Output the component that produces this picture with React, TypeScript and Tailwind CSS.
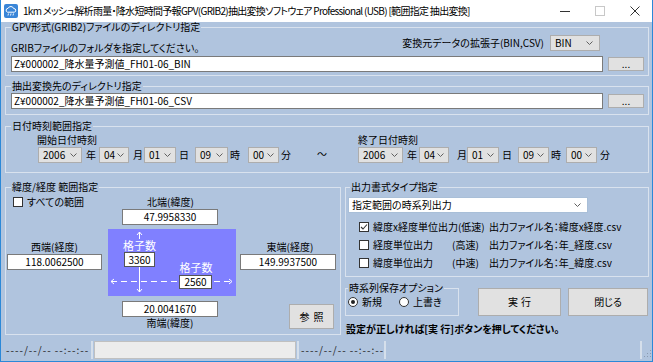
import React from 'react';

function Chevron() {
  return (
    <svg width="7" height="4" viewBox="0 0 7 4" className="shrink-0">
      <path d="M0.5 0.5L3.5 3.5L6.5 0.5" stroke="#606060" fill="none" />
    </svg>
  );
}

function Select({ value, className }: { value: string; className: string }) {
  return (
    <div className={`flex items-center justify-between h-[16px] bg-[#e1e1e1] border border-[#adadad] pl-[4px] pr-[4px] ${className}`}>
      <span>{value}</span>
      <Chevron />
    </div>
  );
}

function Unit({ ch, className }: { ch: string; className: string }) {
  return <span className={`inline-block w-[10px] text-center leading-[16px] ${className}`}>{ch}</span>;
}

function CheckBox({ checked }: { checked?: boolean }) {
  return (
    <span className="w-[10px] h-[10px] shrink-0 border border-[#333] bg-white flex items-center justify-center">
      {checked && (
        <svg width="8" height="8" viewBox="0 0 8 8">
          <path d="M1 4L3 6L7 1.5" stroke="#333" strokeWidth="1.1" fill="none" />
        </svg>
      )}
    </span>
  );
}

function Radio({ checked }: { checked?: boolean }) {
  return (
    <span className="w-[10px] h-[10px] shrink-0 rounded-full border border-[#333] bg-white flex items-center justify-center">
      {checked && <span className="w-[4px] h-[4px] rounded-full bg-[#222]" />}
    </span>
  );
}

function TitleBar() {
  return (
    <div className="h-[22px] shrink-0 bg-white flex items-center">
      <svg width="14" height="14" viewBox="0 0 14 14" className="ml-[3px]">
        <rect x="0" y="0" width="14" height="14" rx="2" fill="#3a86d8" />
        <path d="M3.5 8.2a2 2 0 0 1 0.6-3.9a3 3 0 0 1 5.6 0.3a1.8 1.8 0 0 1 0.5 3.6z" fill="none" stroke="#fff" strokeWidth="1" />
        <path d="M4.5 9.5L4 11.5M7 9.5L6.5 11.5M9.5 9.5L9 11.5" stroke="#fff" strokeWidth="0.9" />
      </svg>
      <span className="ml-[5px] text-[10px] tracking-[-0.7px] leading-[22px] text-black whitespace-nowrap">
        1km メッシュ解析雨量・降水短時間予報GPV(GRIB2)抽出変換ソフトウェア Professional (USB) [範囲指定 抽出変換]
      </span>
      <div className="ml-auto flex h-full">
        <div className="w-[35px] flex items-center justify-center">
          <span className="w-[10px] h-[1px] bg-[#333]" />
        </div>
        <div className="w-[35px] flex items-center justify-center">
          <span className="w-[10px] h-[10px] border border-[#c8c8c8]" />
        </div>
        <div className="w-[35px] flex items-center justify-center">
          <svg width="10" height="10" viewBox="0 0 10 10">
            <path d="M0.5 0.5L9.5 9.5M9.5 0.5L0.5 9.5" stroke="#333" strokeWidth="1" />
          </svg>
        </div>
      </div>
    </div>
  );
}

function Group({ title, className, legendClass, children }: { title: string; className: string; legendClass: string; children: React.ReactNode }) {
  return (
    <fieldset className={`border border-[#d9e2ee] ${className}`}>
      <legend className={`px-[1px] text-[10px] leading-[10px] ${legendClass}`}>{title}</legend>
      {children}
    </fieldset>
  );
}

function DateStart() {
  return (
    <div className="flex flex-col ml-[26px]">
      <span className="leading-[11px]">開始日付時刻</span>
      <div className="flex mt-[2px] ml-[1px]">
        <Select value="2006" className="w-[44px]" />
        <Unit ch="年" className="ml-[4px]" />
        <Select value="04" className="ml-[3px] w-[30px]" />
        <Unit ch="月" className="ml-[4px]" />
        <Select value="01" className="ml-[1px] w-[32px]" />
        <Unit ch="日" className="ml-[3px]" />
        <Select value="09" className="ml-[6px] w-[33px]" />
        <Unit ch="時" className="ml-[2px]" />
        <Select value="00" className="ml-[8px] w-[31px]" />
        <Unit ch="分" className="ml-[2px]" />
      </div>
    </div>
  );
}

function DateEnd() {
  return (
    <div className="flex flex-col ml-[31px]">
      <span className="leading-[11px]">終了日付時刻</span>
      <div className="flex mt-[2px]">
        <Select value="2006" className="w-[45px]" />
        <Unit ch="年" className="ml-[4px]" />
        <Select value="04" className="ml-[2px] w-[30px]" />
        <Unit ch="月" className="ml-[8px]" />
        <Select value="01" className="w-[32px]" />
        <Unit ch="日" className="ml-[3px]" />
        <Select value="09" className="ml-[6px] w-[31px]" />
        <Unit ch="時" className="ml-[2px]" />
        <Select value="00" className="ml-[5px] w-[31px]" />
        <Unit ch="分" className="ml-[3px]" />
      </div>
    </div>
  );
}

function NumBox({ value, className }: { value: string; className: string }) {
  return (
    <div className={`h-[16px] bg-white border border-[#7a7a7a] flex items-center justify-center leading-[14px] ${className}`}>
      {value}
    </div>
  );
}

function GridDiagram() {
  return (
    <div className="relative ml-[1px] mt-[1px] w-[128px] h-[67px] bg-[#8080ff] text-white">
      <svg width="128" height="67" viewBox="0 0 128 67" className="absolute inset-0">
        <g stroke="#fff" strokeWidth="1" fill="none">
          <path d="M31.5 3V10M29 6L31.5 3L34 6" />
          <path d="M31.5 38V63M29 60L31.5 63L34 60" />
          <path d="M3 52.5H70" strokeDasharray="6 4" />
          <path d="M6 50L3 52.5L6 55" />
          <path d="M106 52.5H124" strokeDasharray="6 4" />
          <path d="M121 50L124 52.5L121 55" />
        </g>
      </svg>
      <span className="absolute left-[15px] top-[10px] w-[33px] text-center text-[11px] leading-[12px]">格子数</span>
      <div className="absolute left-[16px] top-[23px] w-[31px] h-[15px] bg-white border border-[#555] text-black flex items-center justify-center leading-[13px]">3360</div>
      <span className="absolute left-[71px] top-[32px] w-[34px] text-center text-[11px] leading-[12px]">格子数</span>
      <div className="absolute left-[71px] top-[46px] w-[33px] h-[14px] bg-white border border-[#555] text-black flex items-center justify-center leading-[12px]">2560</div>
    </div>
  );
}

function LatLonGroup() {
  return (
    <Group title="緯度/経度 範囲指定" className="w-[336px] shrink-0 pb-[3px]" legendClass="ml-[5px]">
      <div className="grid grid-cols-[101px_130px_102px]">
        {/* row 1 */}
        <div className="h-[16px] flex items-end">
          <div className="ml-[7px] h-[12px] flex items-center gap-[4px]">
            <CheckBox />
            <span>すべての範囲</span>
          </div>
        </div>
        <div className="h-[16px] flex items-end justify-center pr-[3px]">
          <span>北端(緯度)</span>
        </div>
        <div />
        {/* row 2 */}
        <div />
        <NumBox value="47.9958330" className="ml-[15px] mt-[1px] w-[96px]" />
        <div />
        {/* row 3 */}
        <div className="flex flex-col pt-[16px]">
          <span className="ml-[1px] w-[95px] text-center">西端(経度)</span>
          <NumBox value="118.0062500" className="ml-[1px] mt-[1px] w-[95px]" />
        </div>
        <div className="mt-[3px]">
          <GridDiagram />
        </div>
        <div className="flex flex-col pt-[16px]">
          <span className="ml-[3px] w-[100px] text-center">東端(経度)</span>
          <NumBox value="149.9937500" className="ml-[3px] mt-[1px] w-[96px]" />
        </div>
        {/* row 4/5 */}
        <div />
        <div className="flex flex-col mt-[5px]">
          <NumBox value="20.0041670" className="ml-[15px] w-[96px]" />
          <span className="ml-[15px] w-[96px] text-center">南端(緯度)</span>
        </div>
        <div className="mt-[8px]">
          <button className="ml-[52px] w-[45px] h-[25px] bg-[#e1e1e1] border border-[#adadad] tracking-[4px] pl-[4px]">参照</button>
        </div>
      </div>
    </Group>
  );
}

function OutputRow({ checked, name, speed, file }: { checked?: boolean; name: string; speed?: string; file: string }) {
  return (
    <div className="h-[18px] flex items-center ml-[11px]">
      <CheckBox checked={checked} />
      {speed ? (
        <>
          <span className="ml-[4px] w-[79px]">{name}</span>
          <span className="w-[37px]">{speed}</span>
        </>
      ) : (
        <span className="ml-[4px] w-[116px]">{name}</span>
      )}
      <span>{file}</span>
    </div>
  );
}

function RightColumn() {
  return (
    <div className="ml-[4px] w-[304px] flex flex-col">
      <Group title="出力書式タイプ指定" className="pl-[2px] pt-[5px] pb-[4px]" legendClass="ml-[2px]">
        <div className="w-[240px] h-[16px] bg-white border border-[#a9bfd8] flex items-center justify-between pl-[3px] pr-[6px]">
          <span>指定範囲の時系列出力</span>
          <Chevron />
        </div>
        <div className="mt-[5px]">
          <OutputRow checked name="緯度x経度単位出力(低速)" file="出力ファイル名：緯度x経度.csv" />
          <OutputRow name="経度単位出力" speed="(高速)" file="出力ファイル名：年_経度.csv" />
          <OutputRow name="緯度単位出力" speed="(中速)" file="出力ファイル名：年_緯度.csv" />
        </div>
      </Group>
      <div className="flex mt-[6px]">
        <Group title="時系列保存オプション" className="w-[114px] shrink-0 pt-[2px] pb-[6px]" legendClass="ml-[2px]">
          <div className="h-[13px] flex items-center ml-[2px] leading-[11px]">
            <Radio checked />
            <span className="ml-[4px]">新規</span>
            <span className="ml-[17px]"><Radio /></span>
            <span className="ml-[4px]">上書き</span>
          </div>
        </Group>
        <button className="ml-[19px] mt-[5px] w-[83px] h-[28px] bg-[#e1e1e1] border border-[#adadad] tracking-[3px] pl-[3px]">実行</button>
        <button className="ml-[7px] mt-[5px] w-[80px] h-[28px] bg-[#e1e1e1] border border-[#adadad]">閉じる</button>
      </div>
      <div className="mt-[7px] ml-[1px] font-bold whitespace-nowrap">設定が正しければ[実 行]ボタンを押してください。</div>
    </div>
  );
}

function StatusBar() {
  return (
    <div className="h-[21px] shrink-0 flex items-stretch pt-[1px] pb-[2px] pl-[1px] text-[#222]">
      <div className="w-[91px] border-r-2 border-[#d5dfeb] pl-[4px] flex items-center tracking-[1px] whitespace-nowrap">----/--/-- --:--:--</div>
      <div className="ml-[1px] w-[202px] bg-[#ececec] border border-[#c0c0c0]" />
      <div className="ml-[1px] w-[89px] border-l-2 border-r-2 border-[#d5dfeb] pl-[2px] flex items-center tracking-[1px] whitespace-nowrap">----/--/-- --:--:--</div>
      <div className="flex-1 border-r-2 border-[#d5dfeb]" />
      <div className="w-[10px] flex items-end justify-end pb-[1px]">
        <svg width="8" height="8" viewBox="0 0 8 8">
          <g fill="#8a9bb0">
            <rect x="6" y="0" width="1" height="1" />
            <rect x="3" y="3" width="1" height="1" />
            <rect x="6" y="3" width="1" height="1" />
            <rect x="0" y="6" width="1" height="1" />
            <rect x="3" y="6" width="1" height="1" />
            <rect x="6" y="6" width="1" height="1" />
          </g>
        </svg>
      </div>
    </div>
  );
}

export default function App() {
  return (
    <div className="w-[653px] h-[362px] overflow-hidden flex flex-col border-x border-b border-[#2b88d8] bg-[#b0c4de] text-[10px] leading-[12px] text-black font-['Noto_Sans_CJK_JP',sans-serif] [font-feature-settings:'palt']">
      <TitleBar />
      <div className="flex-1 flex flex-col pl-[4px] pr-[3px]">
        <Group title="GPV形式(GRIB2)ファイルのディレクトリ指定" className="pl-[5px] pr-[4px] pt-[3px] pb-[3px]" legendClass="">
          <div className="h-[21px] flex items-start">
            <span className="pt-[7px]">GRIBファイルのフォルダを指定してください。</span>
            <div className="ml-auto mr-[44px] h-[15px] flex items-center gap-[6px]">
              <span>変換元データの拡張子(BIN,CSV)</span>
              <div className="w-[50px] h-[16px] bg-[#e1e1e1] border border-[#adadad] flex items-center justify-between pl-[4px] pr-[6px]">
                <span>BIN</span>
                <Chevron />
              </div>
            </div>
          </div>
          <div className="flex items-center">
            <div className="flex-1 h-[16px] bg-white border border-[#7a7a7a] pl-[2px] flex items-center leading-[14px]">Z¥000002_降水量予測値_FH01-06_BIN</div>
            <button className="ml-[5px] w-[36px] h-[14px] bg-[#e1e1e1] border border-[#adadad] leading-[8px]">...</button>
          </div>
        </Group>
        <Group title="抽出変換先のディレクトリ指定" className="mt-[5px] pl-[5px] pr-[4px] pt-[2px] pb-[5px]" legendClass="">
          <div className="flex items-center">
            <div className="flex-1 h-[16px] bg-white border border-[#7a7a7a] pl-[2px] flex items-center leading-[14px]">Z¥000002_降水量予測値_FH01-06_CSV</div>
            <button className="ml-[5px] w-[36px] h-[14px] bg-[#e1e1e1] border border-[#adadad] leading-[8px]">...</button>
          </div>
        </Group>
        <Group title="日付時刻範囲指定" className="mt-[6px] pl-[5px] pt-[3px] pb-[9px]" legendClass="">
          <div className="flex items-end">
            <DateStart />
            <span className="ml-[26px] w-[10px] text-center leading-[16px] mb-[1px]">～</span>
            <DateEnd />
          </div>
        </Group>
        <div className="flex mt-[9px]">
          <LatLonGroup />
          <RightColumn />
        </div>
      </div>
      <StatusBar />
    </div>
  );
}
